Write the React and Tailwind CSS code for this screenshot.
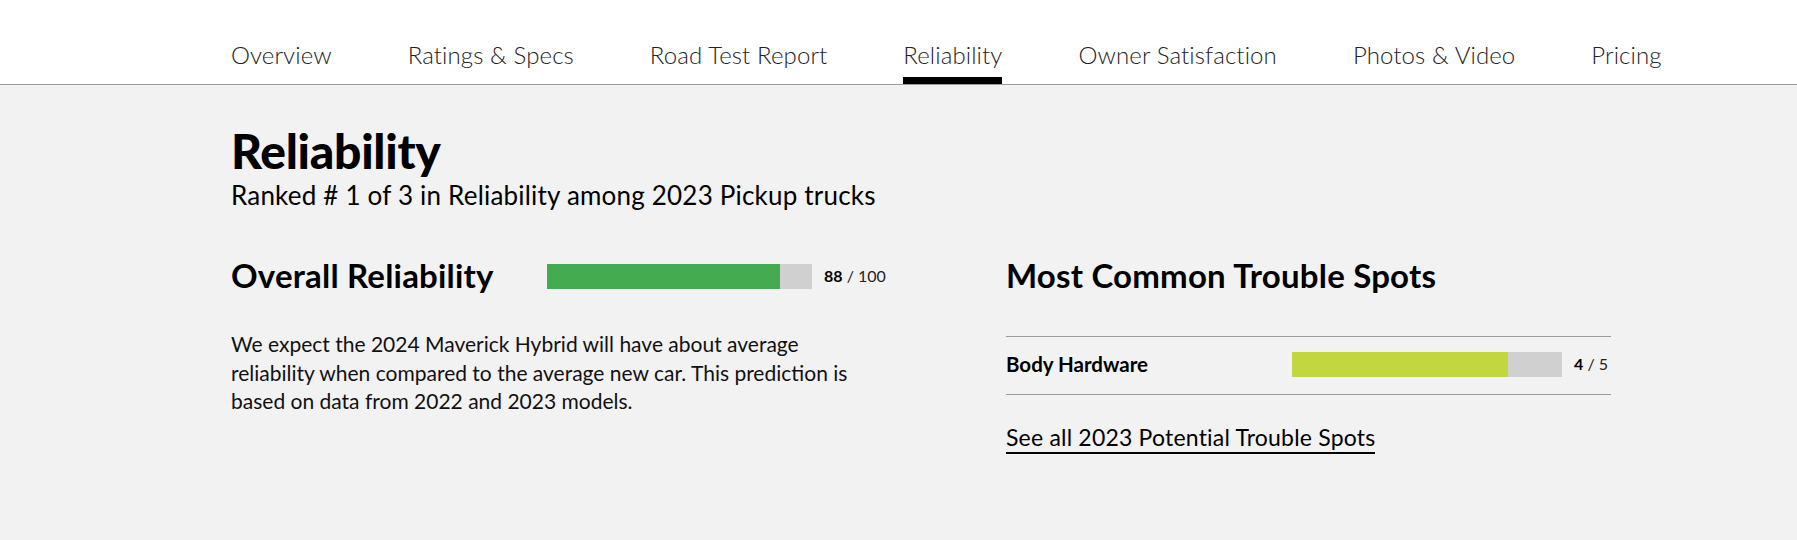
const tabs = [
  "Overview",
  "Ratings & Specs",
  "Road Test Report",
  "Reliability",
  "Owner Satisfaction",
  "Photos & Video",
  "Pricing",
];

const troubleSpots = [{ name: "Body Hardware", score: 4, max: 5 }];

const ScoreBar = ({ value, max, color, width }) => (
  <div className="flex items-center shrink-0">
    <div className={`flex h-[25px] bg-[#d0d0d0] ${width}`}>
      <div className={`h-full ${color}`} style={{ width: `${(value / max) * 100}%` }} />
    </div>
    <span className="ml-[12px] whitespace-nowrap text-[16px] text-[#222]">
      <span className="font-bold text-black">{value}</span> / {max}
    </span>
  </div>
);

const App = () => {
  return (
    <div className="font-['Lato',sans-serif] text-black">
      {/* NAV */}
      <nav className="bg-white border-b border-[#9a9a9a]">
        <div className="flex gap-[76px] pl-[231px]">
          {tabs.map((tab) => (
            <div
              key={tab}
              className={`pt-[40px] pb-[8px] border-b-[7px] text-[24px] leading-[29px] font-light tracking-[0.1px] whitespace-nowrap text-[#222] ${
                tab === "Reliability" ? "border-black" : "border-transparent"
              }`}
            >
              {tab}
            </div>
          ))}
        </div>
      </nav>

      {/* MAIN */}
      <main className="bg-[#f2f2f2] h-[455px]">
        <div className="w-[1400px] ml-[231px] pt-[40px]">
          <h1 className="text-[48px] leading-[52px] font-black tracking-[-0.3px]">Reliability</h1>
          <p className="mt-[3px] text-[26px] leading-[30px] tracking-[0.2px]">
            Ranked # 1 of 3 in Reliability among 2023 Pickup trucks
          </p>

          <div className="flex mt-[46px]">
            {/* LEFT */}
            <div className="w-[775px] shrink-0">
              <div className="flex items-center h-[40px]">
                <h2 className="w-[316px] text-[33px] font-bold tracking-[0.2px]">Overall Reliability</h2>
                <ScoreBar value={88} max={100} color="bg-[#45ab51]" width="w-[265px]" />
              </div>
              <p className="mt-[34px] w-[630px] text-[21px] leading-[28.5px] text-[#111]">
                We expect the 2024 Maverick Hybrid will have about average reliability when
                compared to the average new car. This prediction is based on data from 2022 and
                2023 models.
              </p>
            </div>

            {/* RIGHT */}
            <div className="w-[605px] shrink-0">
              <div className="flex items-center h-[40px]">
                <h2 className="text-[33px] font-bold tracking-[0.2px]">Most Common Trouble Spots</h2>
              </div>
              <div className="mt-[40px] border-t border-b border-[#9a9a9a]">
                {troubleSpots.map((spot) => (
                  <div key={spot.name} className="flex items-center h-[57px] pb-[3px]">
                    <span className="w-[286px] shrink-0 text-[20.5px] font-bold">{spot.name}</span>
                    <ScoreBar
                      value={spot.score}
                      max={spot.max}
                      color="bg-[#c2d63f]"
                      width="w-[270px]"
                    />
                  </div>
                ))}
              </div>
              <a className="inline-block mt-[28px] text-[23px] leading-[28px] tracking-[0.2px] border-b-2 border-black pb-[1px]">
                See all 2023 Potential Trouble Spots
              </a>
            </div>
          </div>
        </div>
      </main>
    </div>
  );
};

export default App;
